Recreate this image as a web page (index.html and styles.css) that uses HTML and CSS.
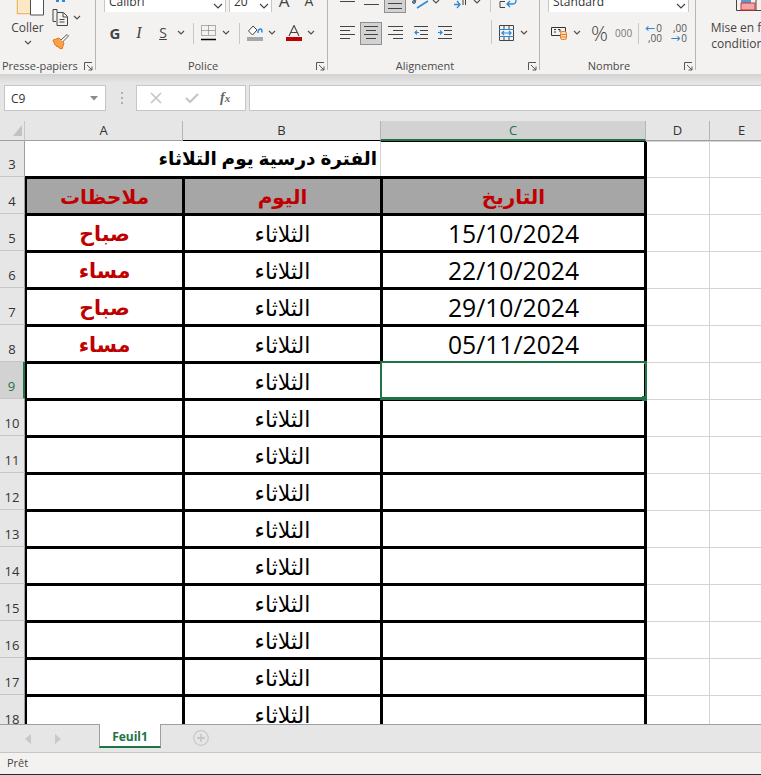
FILE: index.html
```html
<!DOCTYPE html>
<html lang="fr">
<head>
<meta charset="utf-8">
<title>Feuil1 - Excel</title>
<link rel="stylesheet" href="styles.css">
</head>
<body>
<div class="app">
  <section class="ribbon">
    <div class="group g-clip">
      <div class="clip-body">
        <div class="paste">
          <svg class="i-paste" width="33" height="16" viewBox="0 0 33 16"><path d="M5.5 0v13.5H18" fill="#fff" stroke="#f2b661" stroke-width="1.5"/><path d="M7 0v12h11V0z" fill="#fbe6c5"/><path d="M18.5 0v15h13V0" fill="#fff" stroke="#505050"/></svg>
          <span class="paste-label">Coller</span>
          <svg class="chev" width="12" height="6" viewBox="0 0 12 6"><path d="M3 1l3 3 3-3" fill="none" stroke="#505050" stroke-width="1.2"/></svg>
        </div>
        <div class="clip-side">
          <svg class="i-cut" width="12" height="3" viewBox="0 0 12 3"><path d="M1 0h3v2H1zM7 0h3v2H7z" fill="#2b88d8"/></svg>
          <div class="row-copy">
            <svg width="17" height="17" viewBox="0 0 17 17"><path d="M5 3V.5H1v12h3M5 3.500h6.500l4 4v9H5zM11 4v4h4M7.500 10.500h5M7.500 13h5" fill="none" stroke="#444" stroke-width="1"/></svg>
            <svg class="chev ml-2" width="12" height="6" viewBox="0 0 12 6"><path d="M3 1l3 3 3-3" fill="none" stroke="#505050" stroke-width="1.200"/></svg>
          </div>
          <svg class="i-brush" width="17" height="16" viewBox="0 0 17 16"><path d="M1 6l6-2 5 5-2 6-3-1-1-2-1 1-1-2-1 0z" fill="#f7a14a" stroke="#e8781a"/><path d="M9 6l6-5.500 1.500 1.500-6 6" fill="#fff" stroke="#555"/></svg>
        </div>
      </div>
      <div class="g-label">Presse-papiers<svg class="launch" width="9" height="9" viewBox="0 0 9 9"><path d="M.5 8V.5H8M3 3l5 5M8 4.500V8H4.500" fill="none" stroke="#555"/></svg></div>
    </div>

    <div class="group g-font">
      <div class="r1">
        <div class="combo w-font"><span>Calibri</span><svg class="chev" width="12" height="6" viewBox="0 0 12 6"><path d="M2 1l4 4 4-4" fill="none" stroke="#444" stroke-width="1.200"/></svg></div>
        <div class="combo w-size"><span>20</span><svg class="chev" width="12" height="6" viewBox="0 0 12 6"><path d="M2 1l4 4 4-4" fill="none" stroke="#444" stroke-width="1.200"/></svg></div>
        <span class="big-a">A</span>
        <span class="big-a sm">A</span>
      </div>
      <div class="r2 r2-font">
        <span class="t-btn bold">G</span>
        <span class="t-btn ital">I</span>
        <span class="t-btn under">S</span>
        <svg class="chev" width="12" height="6" viewBox="0 0 12 6"><path d="M3 1l3 3 3-3" fill="none" stroke="#505050" stroke-width="1.200"/></svg>
        <span class="sep ml-6"></span>
        <svg class="ml-7" width="15" height="16" viewBox="0 0 15 16"><path d="M.5.500h14v10h-14zM7.500.500v10M.5 5.500h14" fill="none" stroke="#666" stroke-dasharray="1 1"/><path d="M0 14.500h15" stroke="#000" stroke-width="1.500"/></svg>
        <svg class="chev ml-4" width="12" height="6" viewBox="0 0 12 6"><path d="M3 1l3 3 3-3" fill="none" stroke="#505050" stroke-width="1.200"/></svg>
        <span class="sep ml-7"></span>
        <svg class="ml-7" width="16" height="16" viewBox="0 0 16 16"><path d="M6 1l-4.500 5 4 4 4.500-5z" fill="#fff" stroke="#444"/><path d="M11 8c0-3 1-4 2.500-4s1.500 2 1.500 3.500" fill="none" stroke="#2b88d8" stroke-width="1.500"/><path d="M0 12h16v4H0z" fill="#a6a6a6"/></svg>
        <svg class="chev ml-3" width="12" height="6" viewBox="0 0 12 6"><path d="M3 1l3 3 3-3" fill="none" stroke="#505050" stroke-width="1.200"/></svg>
        <svg class="ml-8" width="16" height="16" viewBox="0 0 16 16"><path d="M3 11L8 .5 13 11M4.500 7.500h7" fill="none" stroke="#444" stroke-width="1.100"/><path d="M0 12h16v4H0z" fill="#c00000"/></svg>
        <svg class="chev ml-3" width="12" height="6" viewBox="0 0 12 6"><path d="M3 1l3 3 3-3" fill="none" stroke="#505050" stroke-width="1.200"/></svg>
      </div>
      <div class="g-label">Police<svg class="launch" width="9" height="9" viewBox="0 0 9 9"><path d="M.5 8V.5H8M3 3l5 5M8 4.500V8H4.500" fill="none" stroke="#555"/></svg></div>
    </div>

    <div class="group g-align">
      <div class="r1 r1-align">
        <svg width="15" height="12" viewBox="0 0 15 12"><path d="M0 1.500h15" stroke="#444"/></svg>
        <svg class="ml-9" width="15" height="12" viewBox="0 0 15 12"><path d="M0 4.500h15" stroke="#444"/></svg>
        <span class="active-top"><svg width="14" height="11" viewBox="0 0 14 11"><path d="M0 3.500h14M0 8.500h14" stroke="#444"/></svg></span>
        <svg class="ml-6" width="17" height="12" viewBox="0 0 17 12"><path d="M1 3l3-3M5 8l11-7" fill="none" stroke="#2b88d8" stroke-width="1.500"/><circle cx="2" cy="2" r="1.500" fill="none" stroke="#555"/></svg>
        <svg class="chev ml-1" width="12" height="6" viewBox="0 0 12 6"><path d="M3 0l3 3 3-3" fill="none" stroke="#505050" stroke-width="1.200"/></svg>
        <svg class="ml-12" width="12" height="12" viewBox="0 0 12 12"><path d="M0 4.500h5M3 1l3 3.500L3 8" fill="none" stroke="#2b88d8" stroke-width="1.300"/><path d="M9 0v5M11.500 0v5" stroke="#444"/></svg>
        <svg class="chev ml-5" width="12" height="6" viewBox="0 0 12 6"><path d="M3 0l3 3 3-3" fill="none" stroke="#505050" stroke-width="1.200"/></svg>
        <span class="sep-tall ml-7"></span>
        <svg class="ml-8" width="18" height="9" viewBox="0 0 18 9"><path d="M6 1.500H1v6h5" fill="none" stroke="#444"/><path d="M17 0c0 3-1 4-3 4H9M11 1L8 4l3 3" fill="none" stroke="#2b88d8" stroke-width="1.300"/></svg>
      </div>
      <div class="r2 r2-align">
        <svg width="15" height="14" viewBox="0 0 15 14"><path d="M0 .5h15M0 4.500h10M0 8.500h15M0 12.500h10" stroke="#444"/></svg>
        <span class="active-box"><svg width="14" height="14" viewBox="0 0 14 14"><path d="M0 .5h14M2 4.500h10M0 8.500h14M2 12.500h10" stroke="#444"/></svg></span>
        <svg class="ml-6" width="15" height="14" viewBox="0 0 15 14"><path d="M0 .5h15M5 4.500h10M0 8.500h15M5 12.500h10" stroke="#444"/></svg>
        <svg class="ml-11" width="15" height="14" viewBox="0 0 15 14"><path d="M0 .5h14M6 4.500h8M6 8.500h8M0 12.500h14" stroke="#444"/><path d="M5 6.500H1M3 4.500l-2 2 2 2" fill="none" stroke="#2b88d8" stroke-width="1.200"/></svg>
        <svg class="ml-9" width="15" height="14" viewBox="0 0 15 14"><path d="M0 .5h14M6 4.500h8M6 8.500h8M0 12.500h14" stroke="#444"/><path d="M0 6.500h4M2 4.500l2 2-2 2" fill="none" stroke="#2b88d8" stroke-width="1.200"/></svg>
        <span class="sep-tall2 ml-38"></span>
        <svg class="ml-7" width="15" height="16" viewBox="0 0 15 16"><path d="M.5.500h14v15H.5zM5 .5v4M10 .5v4M5 11v4M10 11v4" fill="none" stroke="#444"/><path d="M0 4.500h15M0 11.500h15" stroke="#2b88d8"/><path d="M3 8h9M5 6L3 8l2 2M10 6l2 2-2 2" fill="none" stroke="#2b88d8" stroke-width="1.200"/></svg>
        <svg class="chev ml-4" width="12" height="6" viewBox="0 0 12 6"><path d="M3 1l3 3 3-3" fill="none" stroke="#505050" stroke-width="1.200"/></svg>
      </div>
      <div class="g-label">Alignement<svg class="launch" width="9" height="9" viewBox="0 0 9 9"><path d="M.5 8V.5H8M3 3l5 5M8 4.500V8H4.500" fill="none" stroke="#555"/></svg></div>
    </div>

    <div class="group g-num">
      <div class="r1">
        <div class="combo w-num"><span>Standard</span><svg class="chev" width="12" height="6" viewBox="0 0 12 6"><path d="M2 1l4 4 4-4" fill="none" stroke="#444" stroke-width="1.200"/></svg></div>
      </div>
      <div class="r2 r2-num">
        <svg width="17" height="14" viewBox="0 0 17 14"><path d="M.5 1.500h14v8H.5z" fill="none" stroke="#333"/><path d="M3 3.500h2M3 6h2M7 3.500h2v2.500" fill="none" stroke="#333"/><rect x="9.500" y="5.500" width="6" height="8" rx="2" fill="#fbe0c3" stroke="#e8781a"/><path d="M9.500 8.500h6M9.500 11h6" stroke="#e8781a"/></svg>
        <svg class="chev ml-3" width="12" height="6" viewBox="0 0 12 6"><path d="M3 1l3 3 3-3" fill="none" stroke="#505050" stroke-width="1.200"/></svg>
        <span class="pct ml-8">%</span>
        <span class="thou ml-8">000</span>
        <span class="sep ml-7"></span>
        <span class="dec ml-7">
          <span class="dec-line"><b class="arrow">←</b>0</span>
          <span class="dec-line">,00</span>
        </span>
        <span class="dec ml-9">
          <span class="dec-line">,00</span>
          <span class="dec-line"><b class="arrow">→</b>0</span>
        </span>
      </div>
      <div class="g-label">Nombre<svg class="launch" width="9" height="9" viewBox="0 0 9 9"><path d="M.5 8V.5H8M3 3l5 5M8 4.500V8H4.500" fill="none" stroke="#555"/></svg></div>
    </div>

    <div class="group-last">
      <svg class="i-cf" width="30" height="11" viewBox="0 0 30 11"><path d="M.5 0v10.500h29V0M10 0v10.500M20 0v10.500" fill="none" stroke="#444"/><path d="M5 0h10v3H5z" fill="#5b9bd5"/><path d="M5 3h14v7H5z" fill="#f4a6a6" stroke="#d13438"/></svg>
      <span class="cf-label">Mise en forme<br>conditionnelle</span>
    </div>
  </section>

  <section class="formula">
    <div class="name-box"><span>C9</span><svg width="10" height="5" viewBox="0 0 10 5"><path d="M0 0h8L4 4.500z" fill="#8a8a8a"/></svg></div>
    <svg class="grip" width="3" height="12" viewBox="0 0 3 12"><path d="M0 0h2v2H0zM0 5h2v2H0zM0 10h2v2H0z" fill="#b0b0b0"/></svg>
    <div class="fx-box">
      <svg width="12" height="12" viewBox="0 0 12 12"><path d="M1 1l10 10M11 1L1 11" stroke="#c4c4c4" stroke-width="1.600"/></svg>
      <svg width="14" height="12" viewBox="0 0 14 12"><path d="M1 6l4 4 8-8" fill="none" stroke="#c4c4c4" stroke-width="2"/></svg>
      <span class="fx">f<small>x</small></span>
    </div>
    <div class="f-input"></div>
  </section>

  <section class="sheet">
    <div class="corner"><svg width="10" height="12" viewBox="0 0 10 12"><path d="M9 0v11H0z" fill="#c2c2c2"/></svg></div>
    <div class="ch">A</div><div class="ch ch-dark">B</div><div class="ch ch-on">C</div><div class="ch">D</div><div class="ch">E</div>

    <div class="rh">3</div><div class="title">الفترة درسية يوم التلاثاء</div><div class="c3"></div><div class="gc"></div><div class="gc"></div>
    <div class="rh">4</div><div class="bx hd">ملاحظات</div><div class="bx hd">اليوم</div><div class="bx hd last">التاريخ</div><div class="gc"></div><div class="gc"></div>
    <div class="rh">5</div><div class="bx note">صباح</div><div class="bx day">الثلاثاء</div><div class="bx last date">15/10/2024</div><div class="gc"></div><div class="gc"></div>
    <div class="rh">6</div><div class="bx note">مساء</div><div class="bx day">الثلاثاء</div><div class="bx last date">22/10/2024</div><div class="gc"></div><div class="gc"></div>
    <div class="rh">7</div><div class="bx note">صباح</div><div class="bx day">الثلاثاء</div><div class="bx last date">29/10/2024</div><div class="gc"></div><div class="gc"></div>
    <div class="rh">8</div><div class="bx note">مساء</div><div class="bx day">الثلاثاء</div><div class="bx last date">05/11/2024</div><div class="gc"></div><div class="gc"></div>
    <div class="rh rh-on">9</div><div class="bx"></div><div class="bx day">الثلاثاء</div><div class="bx last picked"><span class="sel"><i class="handle"></i></span></div><div class="gc"></div><div class="gc"></div>
    <div class="rh">10</div><div class="bx"></div><div class="bx day">الثلاثاء</div><div class="bx last"></div><div class="gc"></div><div class="gc"></div>
    <div class="rh">11</div><div class="bx"></div><div class="bx day">الثلاثاء</div><div class="bx last"></div><div class="gc"></div><div class="gc"></div>
    <div class="rh">12</div><div class="bx"></div><div class="bx day">الثلاثاء</div><div class="bx last"></div><div class="gc"></div><div class="gc"></div>
    <div class="rh">13</div><div class="bx"></div><div class="bx day">الثلاثاء</div><div class="bx last"></div><div class="gc"></div><div class="gc"></div>
    <div class="rh">14</div><div class="bx"></div><div class="bx day">الثلاثاء</div><div class="bx last"></div><div class="gc"></div><div class="gc"></div>
    <div class="rh">15</div><div class="bx"></div><div class="bx day">الثلاثاء</div><div class="bx last"></div><div class="gc"></div><div class="gc"></div>
    <div class="rh">16</div><div class="bx"></div><div class="bx day">الثلاثاء</div><div class="bx last"></div><div class="gc"></div><div class="gc"></div>
    <div class="rh">17</div><div class="bx"></div><div class="bx day">الثلاثاء</div><div class="bx last"></div><div class="gc"></div><div class="gc"></div>
    <div class="rh">18</div><div class="bx"></div><div class="bx day">الثلاثاء</div><div class="bx last"></div><div class="gc"></div><div class="gc"></div>
  </section>

  <section class="tabs">
    <svg class="nav" width="7" height="10" viewBox="0 0 7 10"><path d="M6 0v10L0 5z" fill="#c8c8c8"/></svg>
    <svg class="nav nav2" width="7" height="10" viewBox="0 0 7 10"><path d="M1 0v10l6-5z" fill="#c8c8c8"/></svg>
    <div class="tab">Feuil1</div>
    <svg class="add" width="16" height="16" viewBox="0 0 16 16"><circle cx="8" cy="8" r="7.300" fill="none" stroke="#c8c8c8" stroke-width="1.200"/><path d="M8 4v8M4 8h8" stroke="#c8c8c8" stroke-width="1.800"/></svg>
  </section>

  <footer class="status">Prêt</footer>
</div>
</body>
</html>
```
FILE: styles.css
```css
* { box-sizing: border-box; }
html, body { margin: 0; padding: 0; height: 100%; overflow: hidden; background: #e6e6e6; }
.app { width: 761px; height: 775px; display: flex; flex-direction: column; overflow: hidden; font-family: "Open Sans", "DejaVu Sans", sans-serif; color: #444; }

.ml-1 { margin-left: 1px; } .ml-2 { margin-left: 2px; } .ml-3 { margin-left: 3px; } .ml-4 { margin-left: 4px; }
.ml-5 { margin-left: 5px; } .ml-6 { margin-left: 6px; } .ml-7 { margin-left: 7px; } .ml-8 { margin-left: 8px; }
.ml-9 { margin-left: 9px; } .ml-11 { margin-left: 11px; } .ml-12 { margin-left: 12px; } .ml-38 { margin-left: 38px; }

/* ribbon */
.ribbon { height: 74px; flex: none; display: flex; background: #f3f2f1; overflow: hidden; }
.group { height: 70px; display: flex; flex-direction: column; border-right: 1px solid #b6b6b6; flex: none; }
.g-clip { width: 96px; }
.g-font { width: 232px; padding-left: 8px; }
.g-align { width: 212px; }
.g-num { width: 156px; }
.group-last { flex: 1; min-width: 0; display: flex; flex-direction: column; padding-left: 10px; }
svg { display: block; flex: none; }
.g-label { margin-top: auto; margin-bottom: -3px; height: 14px; font-size: 11px; line-height: 14px; text-align: center; color: #4a4a4a; position: relative; padding-right: 17px; }
.launch { position: absolute; right: 2px; top: 3px; }
.g-clip .g-label { text-align: left; padding-left: 2px; padding-right: 0; }
.g-font .g-label { padding-right: 25px; }

.clip-body { display: flex; padding-left: 11px; }
.paste { width: 33px; display: flex; flex-direction: column; align-items: center; }
.i-paste { margin-left: 2px; }
.paste-label { font-size: 12px; line-height: 16px; margin-top: 4px; white-space: nowrap; }
.paste .chev { margin-top: 4px; }
.clip-side { margin-left: 8px; }
.i-cut { margin-left: 3px; }
.row-copy { display: flex; align-items: center; margin-top: 6px; }
.i-brush { margin-top: 8px; }

.r1 { height: 12px; display: flex; align-items: flex-end; overflow: hidden; flex: none; }
.r2 { height: 22px; margin-top: 10px; display: flex; align-items: center; flex: none; }
.combo { height: 13px; margin-bottom: -1px; background: #fff; border: 1px solid #c6c6c6; border-top: 0; display: flex; align-items: flex-end; justify-content: space-between; overflow: hidden; font-size: 12px; line-height: 14px; padding: 0 1px 0 4px; color: #333; }
.combo span { margin-bottom: 3px; }
.combo .chev { margin-bottom: 3px; }
.w-font { width: 122px; }
.w-size { width: 43px; margin-left: 3px; }
.w-num { width: 141px; margin-left: 8px; }
.big-a { font-size: 17px; line-height: 16px; margin-left: 4px; margin-bottom: 3px; color: #444; width: 16px; text-align: center; }
.big-a.sm { font-size: 14px; margin-left: 9px; }
.t-btn { width: 24px; text-align: center; font-size: 15px; line-height: 20px; color: #444; }
.t-btn.bold { font-weight: 700; margin-left: -1px; }
.t-btn.ital { font-style: italic; font-family: "Liberation Serif", serif; font-size: 16px; }
.t-btn.under { text-decoration: underline; font-size: 14px; }
.sep { width: 1px; height: 21px; background: #c8c8c8; flex: none; }
.r1-align { padding-left: 12px; align-items: flex-start; overflow: visible; }
.active-top { width: 22px; height: 13px; margin-left: 5px; border: 1px solid #8f8f8f; border-top: 0; background: #d2d2d2; display: flex; justify-content: center; flex: none; }
.sep-tall { width: 1px; height: 12px; background: #c8c8c8; flex: none; }
.sep-tall2 { width: 1px; height: 24px; margin-top: -2px; background: #c8c8c8; flex: none; }
.r2-align { padding-left: 12px; }
.active-box { width: 22px; height: 23px; margin-left: 5px; border: 1px solid #8f8f8f; background: #d2d2d2; display: flex; align-items: center; justify-content: center; flex: none; }
.r2-num { padding-left: 11px; }
.pct { font-size: 21px; font-weight: 300; line-height: 22px; width: 16px; text-align: center; color: #444; }
.thou { font-size: 10px; width: 16px; text-align: center; color: #777; }
.dec { width: 16px; display: flex; flex-direction: column; font-size: 10px; line-height: 10px; color: #555; flex: none; white-space: nowrap; }
.dec-line { display: flex; justify-content: flex-end; height: 10px; }
.arrow { color: #2b88d8; font-weight: 400; font-size: 12px; line-height: 10px; margin-right: 1px; }

.i-cf { margin-left: 30px; }
.cf-label { display: block; width: 90px; margin-top: 9px; font-size: 12px; line-height: 16px; text-align: center; white-space: nowrap; color: #444; }

/* formula bar */
.formula { height: 47px; flex: none; padding: 11px 0 0 4px; display: flex; align-items: flex-start; background: linear-gradient(#d2d2d2, #e6e6e6 9px); }
.name-box { width: 102px; height: 26px; background: #fff; border: 1px solid #c6c6c6; display: flex; align-items: center; justify-content: space-between; padding: 0 5px 0 6px; font-size: 12px; color: #333; }
.grip { margin: 7px 0 0 15px; }
.fx-box { width: 110px; height: 26px; margin-left: 12px; background: #fff; border: 1px solid #c6c6c6; display: flex; align-items: center; padding-left: 13px; gap: 23px; }
.fx { font-family: "Liberation Serif", serif; font-style: italic; font-weight: 700; font-size: 14px; color: #666; margin-left: -2px; }
.fx small { font-size: 11px; }
.f-input { flex: 1; height: 26px; margin-left: 3px; background: #fff; border: 1px solid #c6c6c6; border-right: 0; }

/* sheet */
.sheet { height: 603px; flex: none; overflow: hidden; background: #fff; display: grid; grid-template-columns: 25px 158px 198px 265px 64px 64px; grid-template-rows: 20px 36px; grid-auto-rows: 37px; }
.corner { background: #e6e6e6; border-right: 1px solid #c6c6c6; border-bottom: 1px solid #9f9f9f; z-index: 3; display: flex; align-items: flex-end; justify-content: flex-end; padding: 0 1px 3px 0; }
.ch { background: #e6e6e6; border-right: 1px solid #b4b4b4; border-bottom: 1px solid #9f9f9f; font-size: 13px; line-height: 19px; text-align: center; color: #333; z-index: 3; }
.ch-dark { border-bottom-color: #000; }
.ch-on { background: #d2d2d2; color: #217346; border-bottom: 2px solid #217346; }
.rh { background: #e6e6e6; border-right: 1px solid #9f9f9f; border-bottom: 1px solid #c6c6c6; font-size: 13px; color: #333; display: flex; align-items: center; justify-content: center; z-index: 3; padding-top: 11px; }
.rh-on { background: #d2d2d2; color: #217346; border-right: 2px solid #217346; }
.title { grid-column: span 2; font-weight: 700; font-size: 18.5px; color: #000; text-align: right; direction: rtl; padding-right: 4px; line-height: 34px; white-space: nowrap; }
.c3 { margin-left: -1px; margin-top: -1px; margin-right: -1px; border-left: 1px solid #d4d4d4; border-right: 3px solid #000; border-top: 2px solid #000; }
.gc { border-right: 1px solid #d4d4d4; border-top: 1px solid #d4d4d4; }
.bx { margin: -1px 1px 1px -1px; border-left: 3px solid #000; border-top: 3px solid #000; display: flex; align-items: center; justify-content: center; min-width: 0; white-space: nowrap; position: relative; }
.bx.last { margin-right: -1px; border-right: 3px solid #000; }
.hd { background: #a6a6a6; color: #c00000; font-weight: 700; font-size: 20px; }
.note { color: #c00000; font-weight: 700; font-size: 20.5px; }
.day { color: #000; font-size: 22px; }
.date { color: #000; font-size: 24.7px; }
.picked { border-color: #fff; z-index: 2; }
.sel { position: absolute; left: -3px; top: -3px; right: -3px; height: 39px; border: solid #217346; border-width: 2px 2px 3px 2px; }
.handle { position: absolute; right: -2px; bottom: -4px; width: 5px; height: 5px; background: #217346; display: block; }

/* tabs */
.tabs { height: 28px; flex: none; background: #e6e6e6; border-top: 1px solid #9f9f9f; display: flex; align-items: flex-start; padding-left: 25px; }
.nav { margin-top: 9px; }
.nav2 { margin-left: 22px; }
.tab { width: 62px; height: 24px; margin-left: 38px; margin-top: -1px; background: #fff; border: 1px solid #9f9f9f; border-top: 0; border-bottom: 2px solid #217346; font-size: 12px; font-weight: 700; line-height: 26px; color: #217346; text-align: center; }
.add { margin: 5px 0 0 32px; }

/* status */
.status { height: 23px; flex: none; background: #f3f2f1; border-top: 1px solid #c6c6c6; border-bottom: 1px solid #1f2d33; font-size: 11px; line-height: 20px; padding-left: 7px; color: #444; }
```
